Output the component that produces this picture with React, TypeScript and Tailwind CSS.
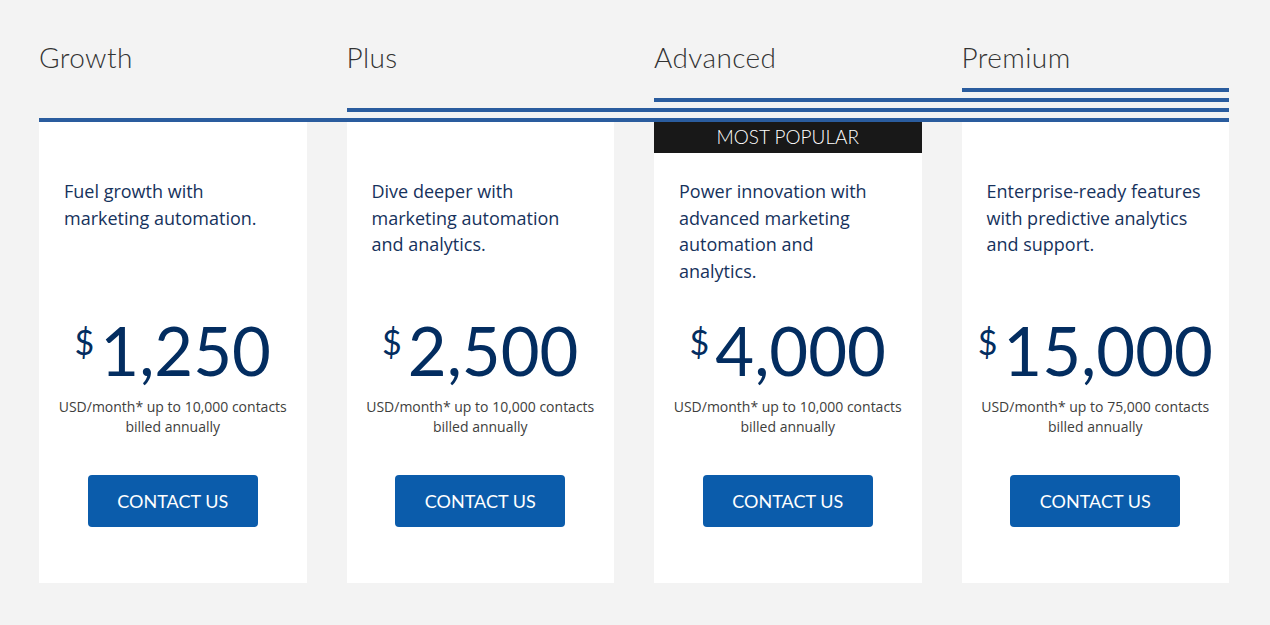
const plans = [
  {
    name: 'Growth',
    desc: ['Fuel growth with', 'marketing automation.'],
    price: '1,250',
    contacts: '10,000',
    popular: false,
  },
  {
    name: 'Plus',
    desc: ['Dive deeper with', 'marketing automation', 'and analytics.'],
    price: '2,500',
    contacts: '10,000',
    popular: false,
  },
  {
    name: 'Advanced',
    desc: ['Power innovation with', 'advanced marketing', 'automation and', 'analytics.'],
    price: '4,000',
    contacts: '10,000',
    popular: true,
  },
  {
    name: 'Premium',
    desc: ['Enterprise-ready features', 'with predictive analytics', 'and support.'],
    price: '15,000',
    contacts: '75,000',
    popular: false,
  },
];

export default function App() {
  return (
    <div className="min-h-[625px] bg-[#f3f3f3] pl-[39px] font-['Lato',sans-serif]">
      <div className="w-[1190px]">
        {/* Headings with stepped rules */}
        <div className="grid grid-cols-4 gap-x-10 gap-y-[6px]">
          {plans.map((plan) => (
            <h2
              key={plan.name}
              className="h-[82px] pt-[41px] text-[28px] leading-[32px] font-light tracking-[0.4px] text-[#333333]"
            >
              {plan.name}
            </h2>
          ))}
          <div className="col-start-4 col-span-1 h-1 bg-[#2a5c9e]"></div>
          <div className="col-start-3 col-span-2 h-1 bg-[#2a5c9e]"></div>
          <div className="col-start-2 col-span-3 h-1 bg-[#2a5c9e]"></div>
          <div className="col-start-1 col-span-4 h-1 bg-[#2a5c9e]"></div>
        </div>

        {/* Cards */}
        <div className="grid grid-cols-4 gap-x-10">
          {plans.map((plan) => (
            <div key={plan.name} className="h-[461px] bg-white flex flex-col">
              {plan.popular ? (
                <div className="h-[31px] bg-[#181818] text-white text-[19px] font-light uppercase flex items-center justify-center">
                  Most Popular
                </div>
              ) : (
                <div className="h-[31px]"></div>
              )}
              <p className="mt-[25px] h-[139px] px-[25px] whitespace-nowrap font-['Open_Sans',sans-serif] text-[18px] leading-[26.5px] text-[#16325c]">
                {plan.desc.map((line, i) => (
                  <span key={i} className="block">
                    {line}
                  </span>
                ))}
              </p>
              <div className="flex items-start justify-center text-[#032d60]">
                <span className="text-[34px] leading-none mt-[8px] mr-[6px]">$</span>
                <span className="text-[67px] leading-none">{plan.price}</span>
              </div>
              <p className="mt-[13px] text-center font-['Open_Sans',sans-serif] text-[14px] leading-[20px] text-[#3e3e3c]">
                USD/month* up to {plan.contacts} contacts
                <br />
                billed annually
              </p>
              <div className="mt-[38px] flex justify-center">
                <button className="w-[170px] h-[52px] rounded bg-[#0b5cab] text-white text-[18px] uppercase">
                  Contact Us
                </button>
              </div>
            </div>
          ))}
        </div>
      </div>
    </div>
  );
}
